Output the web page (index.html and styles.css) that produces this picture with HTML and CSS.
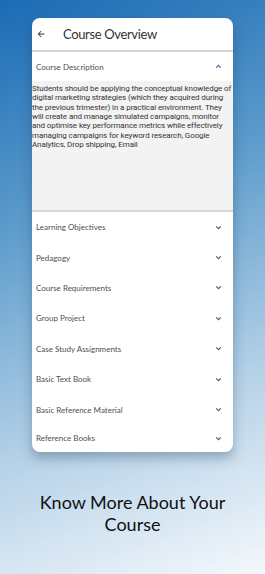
FILE: index.html
```html
<!DOCTYPE html>
<html lang="en">
<head>
  <meta charset="UTF-8">
  <title>Course Overview</title>
  <link rel="stylesheet" href="styles.css">
</head>
<body>
  <div class="card">
    <div class="topbar">
      <svg class="back" width="10" height="10" viewBox="0 0 24 24"><path d="M20 11H7.8l5.6-5.6L12 4l-8 8 8 8 1.4-1.4L7.8 13H20z" fill="#333"/></svg>
      <span class="title">Course Overview</span>
    </div>

    <div class="row open">
      <span>Course Description</span>
      <svg width="9" height="9" viewBox="0 0 24 24"><path d="M6 15l6-6 6 6" fill="none" stroke="#3a6f9a" stroke-width="3"/></svg>
    </div>
    <div class="desc">
      <p>Students should be applying the conceptual knowledge of digital marketing strategies (which they acquired during the previous trimester) in a practical environment. They will create and manage simulated campaigns, monitor and optimise key performance metrics while effectively managing campaigns for keyword research, Google Analytics, Drop shipping, Email</p>
    </div>

    <div class="row"><span>Learning Objectives</span><svg width="9" height="9" viewBox="0 0 24 24"><path d="M6 9l6 6 6-6" fill="none" stroke="#555" stroke-width="3"/></svg></div>
    <div class="row"><span>Pedagogy</span><svg width="9" height="9" viewBox="0 0 24 24"><path d="M6 9l6 6 6-6" fill="none" stroke="#555" stroke-width="3"/></svg></div>
    <div class="row"><span>Course Requirements</span><svg width="9" height="9" viewBox="0 0 24 24"><path d="M6 9l6 6 6-6" fill="none" stroke="#555" stroke-width="3"/></svg></div>
    <div class="row"><span>Group Project</span><svg width="9" height="9" viewBox="0 0 24 24"><path d="M6 9l6 6 6-6" fill="none" stroke="#555" stroke-width="3"/></svg></div>
    <div class="row"><span>Case Study Assignments</span><svg width="9" height="9" viewBox="0 0 24 24"><path d="M6 9l6 6 6-6" fill="none" stroke="#555" stroke-width="3"/></svg></div>
    <div class="row"><span>Basic Text Book</span><svg width="9" height="9" viewBox="0 0 24 24"><path d="M6 9l6 6 6-6" fill="none" stroke="#555" stroke-width="3"/></svg></div>
    <div class="row"><span>Basic Reference Material</span><svg width="9" height="9" viewBox="0 0 24 24"><path d="M6 9l6 6 6-6" fill="none" stroke="#555" stroke-width="3"/></svg></div>
    <div class="row last"><span>Reference Books</span><svg width="9" height="9" viewBox="0 0 24 24"><path d="M6 9l6 6 6-6" fill="none" stroke="#555" stroke-width="3"/></svg></div>
  </div>

  <h1 class="tagline">Know More About Your Course</h1>
</body>
</html>
```

FILE: styles.css
```css
html, body {
  height: 100%;
}
body {
  margin: 0;
  background: linear-gradient(160deg, #1b6bb5 0%, #5d9ccc 35%, #b6d2e8 70%, #f4f8fc 100%);
  font-family: Lato, sans-serif;
  padding-top: 18px;
  box-sizing: border-box;
}
.card {
  width: 201px;
  margin-left: 32px;
  background: #fff;
  border-radius: 8px;
  overflow: hidden;
  box-shadow: 0 6px 12px rgba(30, 60, 90, 0.35);
}
.topbar {
  height: 32px;
  display: flex;
  align-items: center;
  border-bottom: 2px solid #d7d7d7;
}
.back {
  margin-left: 4px;
}
.title {
  margin-left: 17px;
  font-size: 13px;
  letter-spacing: -0.35px;
  color: #333;
}
.row {
  height: 30.4px;
  display: flex;
  align-items: center;
  justify-content: space-between;
  padding: 0 10px 0 4px;
  font-size: 8px;
  color: #4f4f4f;
}
.row.open {
  height: 29px;
}
.row.last {
  height: 27px;
}
.desc {
  background: #f3f3f3;
  height: 126px;
  padding-top: 3px;
  border-bottom: 2px solid #d7d7d7;
}
.desc p {
  margin: 0;
  font-family: Roboto, sans-serif;
  font-size: 8px;
  letter-spacing: -0.1px;
  line-height: 9.35px;
  color: #333;
}
.tagline {
  margin: 39px 0 0;
  text-align: center;
  font-weight: 400;
  font-size: 18px;
  line-height: 22px;
  color: #111;
  padding: 0 20px;
}
```
